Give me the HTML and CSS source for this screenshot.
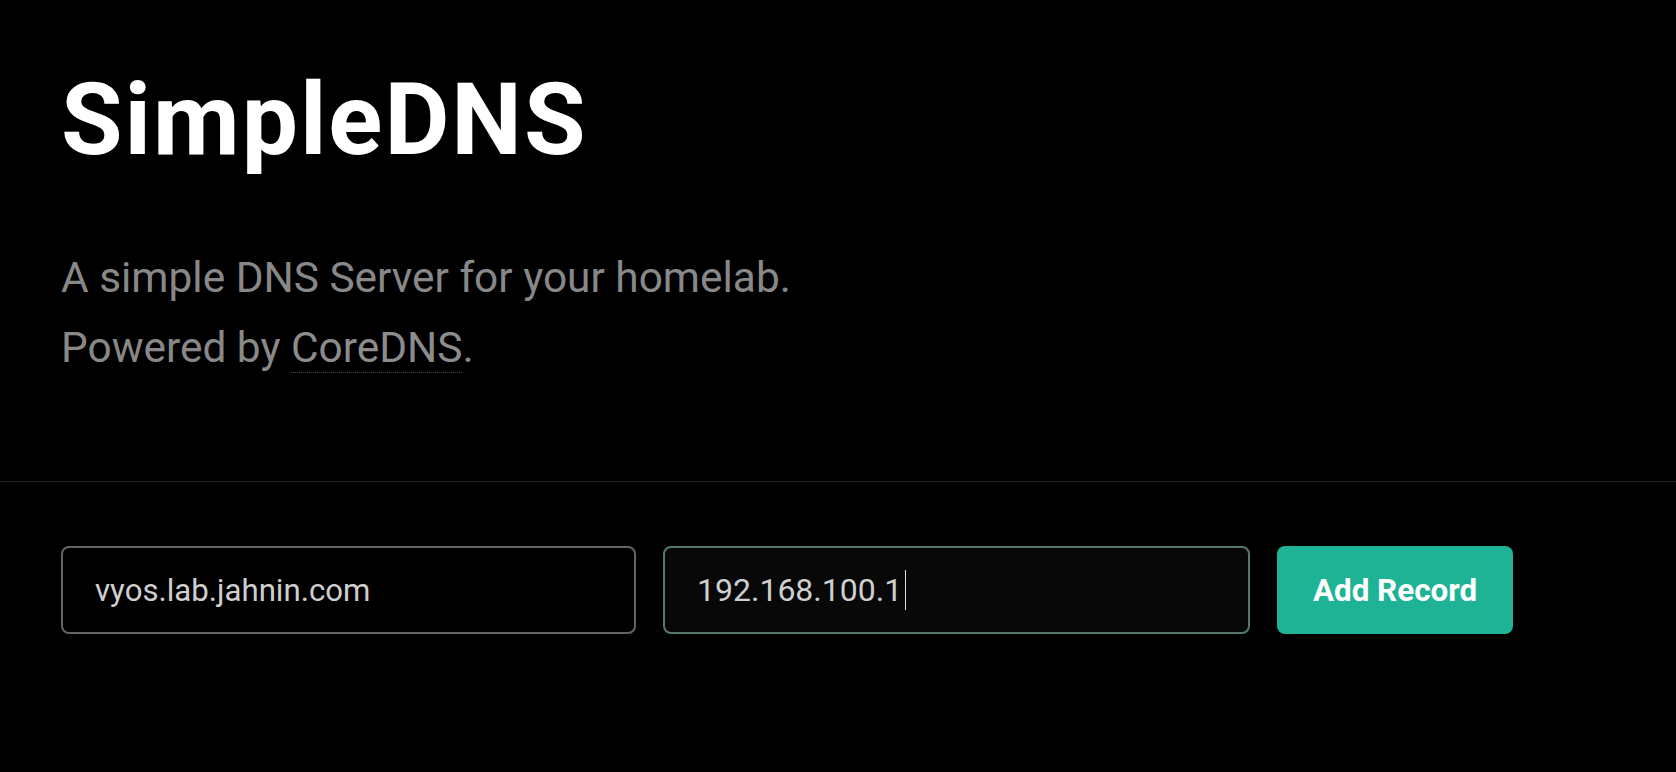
FILE: index.html
```html
<!DOCTYPE html>
<html lang="en">
<head>
<meta charset="utf-8">
<title>SimpleDNS</title>
<link rel="stylesheet" href="styles.css">
</head>
<body>
<header class="hero">
  <h1 class="title">SimpleDNS</h1>
  <p class="tagline">A simple DNS Server for your homelab.<br>Powered by <a class="link" href="#">CoreDNS</a>.</p>
</header>
<main class="content">
  <form class="record-form">
    <input class="field field-name" type="text" value="vyos.lab.jahnin.com">
    <div class="field field-ip field-focus"><span class="field-value">192.168.100.1</span><span class="caret"></span></div>
    <button class="btn" type="button">Add Record</button>
  </form>
</main>
</body>
</html>
```

FILE: styles.css
```css
html, body {
  margin: 0;
  padding: 0;
  background: #000;
}
body {
  font-family: Roboto, "Liberation Sans", sans-serif;
  color: #fff;
}
.hero {
  padding: 70px 61px 98px;
  border-bottom: 1px solid #222;
}
.title {
  margin: 0;
  font-size: 100px;
  line-height: 1;
  font-weight: 700;
  letter-spacing: 2px;
  color: #fff;
}
.tagline {
  margin: 73px 0 0;
  font-size: 42.4px;
  line-height: 70px;
  color: #888;
}
.link {
  color: #8c8c8c;
  text-decoration: none;
  border-bottom: 1px dotted #444;
}
.content {
  padding: 64px 61px;
}
.record-form {
  display: flex;
  gap: 27px;
  align-items: stretch;
}
.field {
  box-sizing: border-box;
  height: 88px;
  margin: 0;
  padding: 0 32px;
  border: 2px solid #646464;
  border-radius: 8px;
  background: #000;
  color: #cfcfcf;
  font-family: Roboto, "Liberation Sans", sans-serif;
  font-size: 31.2px;
  outline: none;
}
.field-name {
  width: 575px;
}
.field-ip {
  width: 587px;
  display: flex;
  align-items: center;
  font-size: 32px;
}
.field-focus {
  border-color: #55786d;
  background: #080808;
}
.caret {
  display: inline-block;
  width: 1px;
  height: 40px;
  margin-left: 3px;
  background: #ddd;
}
.btn {
  box-sizing: border-box;
  width: 236px;
  height: 88px;
  border: 0;
  border-radius: 8px;
  background: #1eb394;
  color: #fff;
  font-family: Roboto, "Liberation Sans", sans-serif;
  font-size: 31.4px;
  font-weight: 700;
  cursor: pointer;
}
```
